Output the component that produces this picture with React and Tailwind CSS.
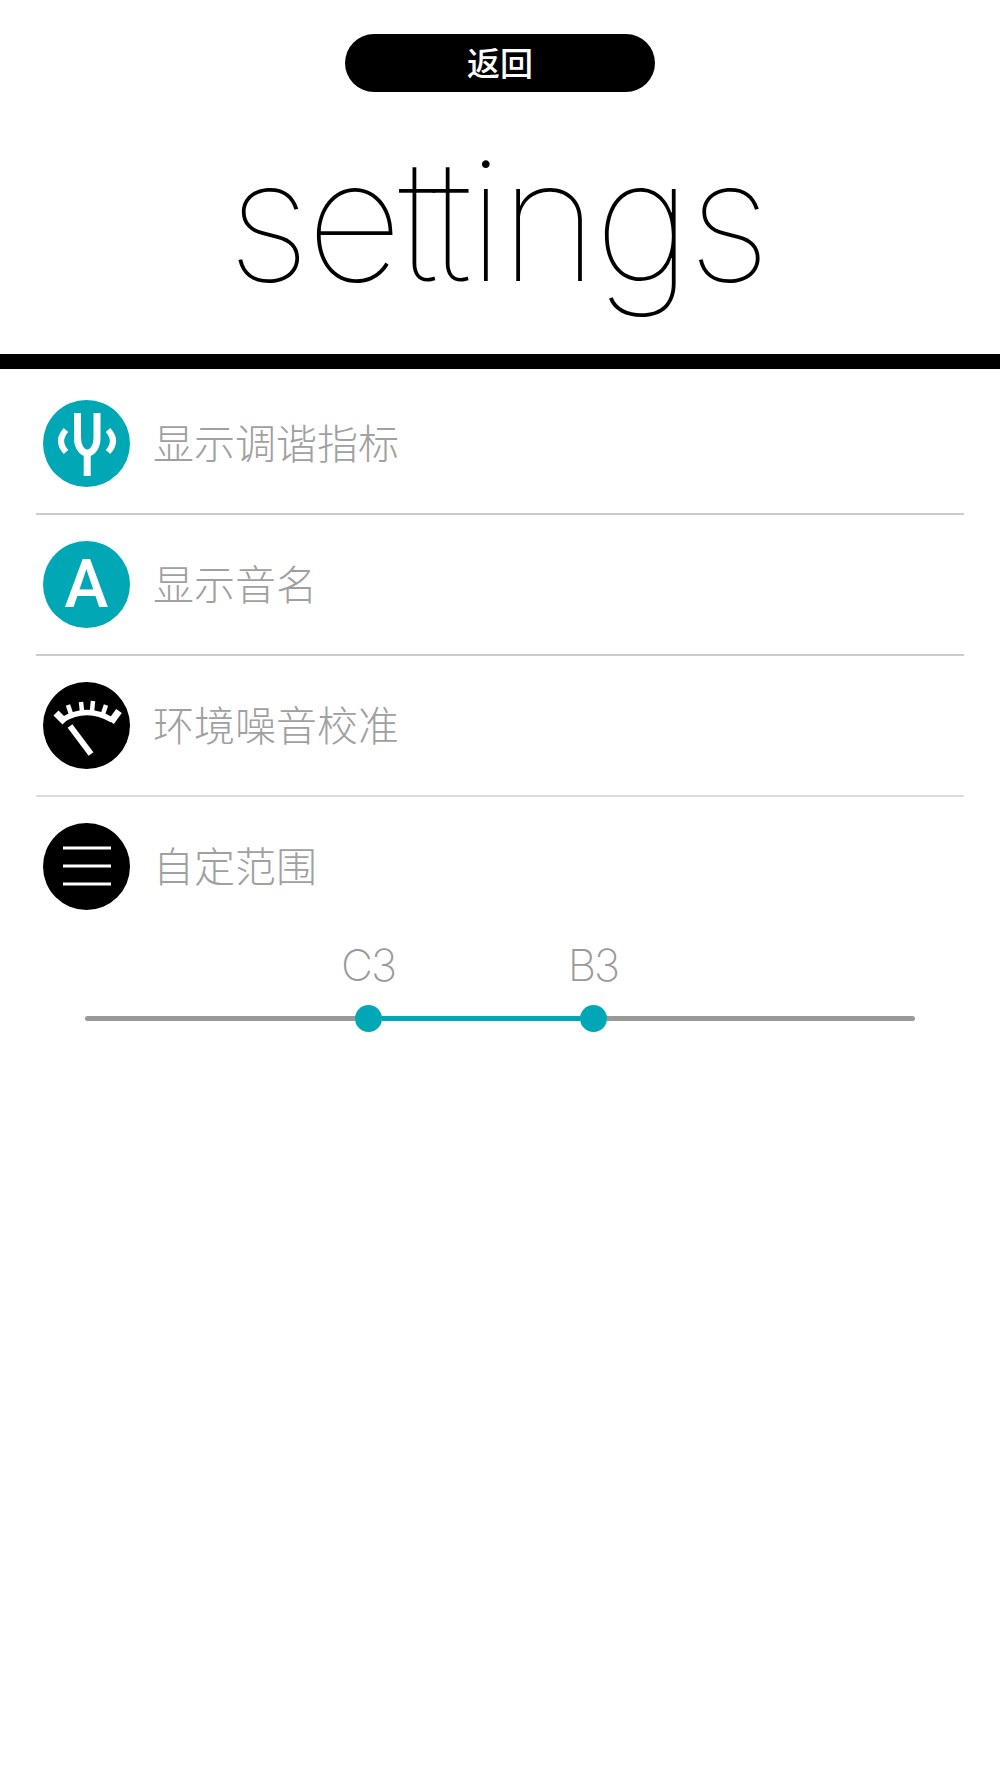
const CJK = "font-['Noto_Sans_CJK_SC',sans-serif]";

function Fork() {
  return (
    <svg viewBox="0 0 87 87" className="w-full h-full" fill="none" stroke="#fff">
      <path d="M34.5 13 V38 A9.75 15 0 0 0 54 38 V13" strokeWidth="7" />
      <path d="M44.2 53 V76" strokeWidth="7" />
      <path d="M23 30 Q13 41 23 52" strokeWidth="6" />
      <path d="M65 30 Q75 41 65 52" strokeWidth="6" />
    </svg>
  );
}

function Gauge() {
  return (
    <svg viewBox="0 0 87 87" className="w-full h-full" fill="none" stroke="#fff" strokeWidth="5">
      <path d="M19 38 Q44 23 69 38" strokeWidth="5.5" />
      <path d="M13 31 L22 40" strokeWidth="7" />
      <path d="M25 23 L28 32" strokeWidth="4.5" />
      <path d="M38 20 L39 29" strokeWidth="4.5" />
      <path d="M50 19 L49 29" strokeWidth="4.5" />
      <path d="M63 23 L60 32" strokeWidth="4.5" />
      <path d="M76 29 L68 40" strokeWidth="7" />
      <path d="M27 44 L48 72" strokeWidth="6" />
    </svg>
  );
}

function Lines() {
  return (
    <svg viewBox="0 0 87 87" className="w-full h-full" fill="none" stroke="#fff" strokeWidth="3">
      <path d="M20 25 H68" />
      <path d="M20 43 H68" />
      <path d="M20 61 H68" />
    </svg>
  );
}

function Row({ bg, icon, label, border }) {
  return (
    <div className={`flex items-center pl-[7px] pt-[26px] pb-[26px] ${border}`}>
      <div className={`w-[87px] h-[87px] rounded-full shrink-0 flex items-center justify-center ${bg}`}>
        {icon}
      </div>
      <span className={`ml-[23px] pb-[5px] text-[41px] leading-[60px] font-light text-[#a0a0a0] ${CJK}`}>{label}</span>
    </div>
  );
}

function Thumb() {
  return <div className="w-[27px] h-[27px] rounded-full bg-[#00a8b5] shrink-0" />;
}

export default function App() {
  return (
    <div className="w-[1000px] h-[1778px] bg-white overflow-hidden">
      <div className="flex justify-center pt-[34px]">
        <button className={`w-[310px] h-[58px] pb-[2px] rounded-[29px] bg-black text-white text-[33px] leading-[56px] font-medium ${CJK}`}>
          返回
        </button>
      </div>
      <h1 className="h-[262px] pb-[6px] pr-[6px] flex items-center justify-center text-[168px] leading-[256px] tracking-[-4px] font-[140] text-black font-['Inter',sans-serif]">
        settings
      </h1>
      <div className="h-[15px] bg-black" />
      <div className="px-9 pt-[5px]">
        <Row bg="bg-[#00a8b5]" icon={<Fork />} label="显示调谐指标" border="border-b-2 border-[#cbcbcb]" />
        <Row bg="bg-[#00a8b5]" icon={<span className="text-white text-[66px] leading-none font-medium font-['Roboto',sans-serif]">A</span>} label="显示音名" border="border-b-2 border-[#cbcbcb]" />
        <Row bg="bg-black" icon={<Gauge />} label="环境噪音校准" border="border-b-2 border-[#dcdcdc]" />
        <Row bg="bg-black" icon={<Lines />} label="自定范围" border="" />
      </div>
      <div className="mx-[85px] mt-[-1px] flex flex-col gap-[10px]">
        <div className="flex h-[60px] pl-[233px] gap-[125px] text-[44px] leading-[60px] font-extralight tracking-[-2px] text-[#9a9a9a] text-center font-['Inter',sans-serif]">
          <span className="w-[100px]">C3</span>
          <span className="w-[100px]">B3</span>
        </div>
        <div className="flex items-center">
          <div className="w-[270px] h-[5px] rounded-l-full bg-[#999999]" />
          <Thumb />
          <div className="w-[198px] h-[5px] bg-[#00a8b5]" />
          <Thumb />
          <div className="flex-1 h-[5px] rounded-r-full bg-[#999999]" />
        </div>
      </div>
    </div>
  );
}
